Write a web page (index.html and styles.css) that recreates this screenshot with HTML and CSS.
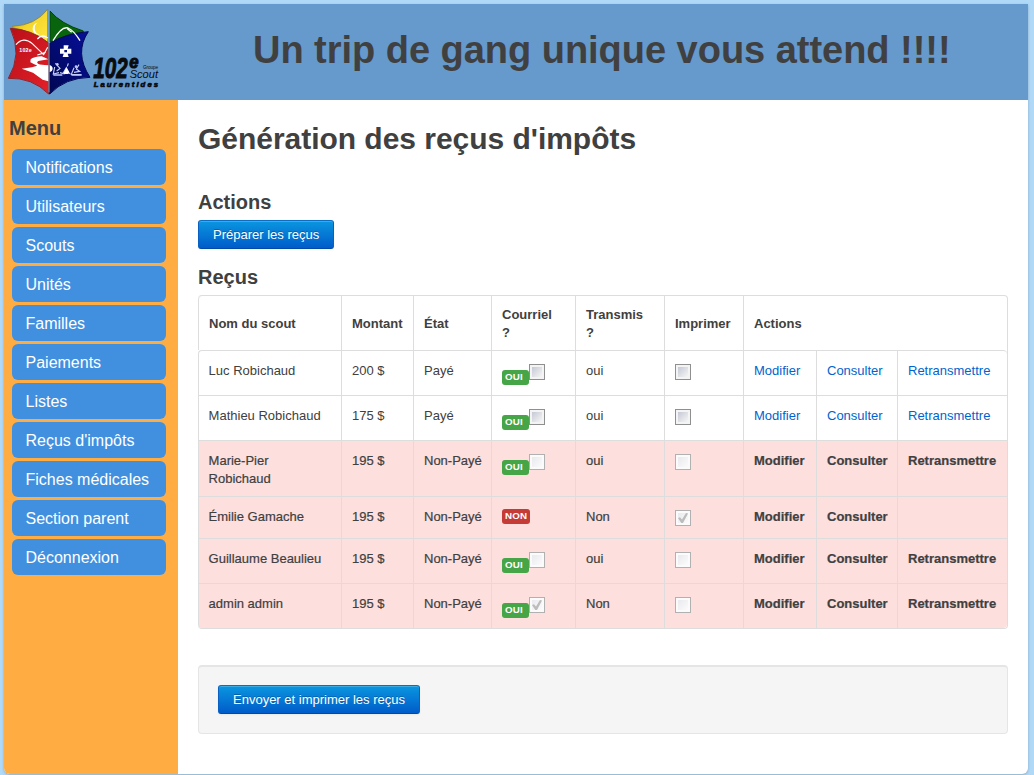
FILE: index.html
```
<!DOCTYPE html>
<html lang="fr">
<head>
<meta charset="utf-8">
<title>Génération des reçus d'impôts</title>
<link rel="stylesheet" href="styles.css">
</head>
<body>
<div class="page">
  <header class="banner">
    <svg class="logo" viewBox="12 12 480 288" width="160" height="96">
      <defs>
        <linearGradient id="yellow" x1="0" y1="0" x2="1" y2="1"><stop offset="0" stop-color="#b99b0c"/><stop offset=".45" stop-color="#f4d52b"/><stop offset="1" stop-color="#ffe83f"/></linearGradient>
        <linearGradient id="red" x1="0" y1="0" x2="1" y2="1"><stop offset="0" stop-color="#b80f17"/><stop offset="1" stop-color="#e3202a"/></linearGradient>
        <linearGradient id="blue" x1="1" y1="0" x2="0" y2="1"><stop offset="0" stop-color="#070f9d"/><stop offset="1" stop-color="#000750"/></linearGradient>
      </defs>
      <path d="M38 79Q106 76 143 28V126Q84 91 38 83Z" fill="url(#yellow)" stroke="#8f7c1d" stroke-width="2"/>
      <path d="M150 33Q183 74 252 77L249 96Q197 104 150 126Z" fill="none"/>
      <path d="M150 33Q183 72 250 93L249 97Q197 104 150 126Z" fill="#08650d" stroke="#034307" stroke-width="3" stroke-linejoin="round"/>
      <path d="M31 85Q96 88 146 129V282Q96 232 25 235Q68 163 31 85Z" fill="url(#red)" stroke="#8e252c" stroke-width="3" stroke-linejoin="round"/>
      <path d="M149 130Q194 101 265 95Q222 158 270 232Q196 233 149 282Z" fill="url(#blue)" stroke="#020955" stroke-width="3" stroke-linejoin="round"/>
      <path d="M113 68A18 18 0 1 0 119 104A20 20 0 0 1 113 68Z" fill="#fff"/>
      <path d="M112 117Q126 101 143 114" fill="none" stroke="#fff" stroke-width="4"/>
      <path d="M159 122Q185 78 204 84Q221 91 240 122M202 86L215 97" fill="none" stroke="#fff" stroke-width="4"/>
      <path d="M48 134Q70 108 97 131L131 164L143 142M112 165L137 157" fill="none" stroke="#fff" stroke-width="3.5"/>
      <path d="M92 178Q101 170 125 169L145 178L115 183Q101 194 145 196V244L128 239L99 218L65 206L96 202L112 197L91 187Z" fill="#fff"/>
      <text x="58" y="156" class="logo-tiny" textLength="37">102e</text>
      <path d="M188 136H206L203 146H214V161H203L206 171H188L191 161H180V146H191V136Z" fill="#fff"/>
      <path d="M193 150H201V157H193Z" fill="#071181"/>
      <path d="M149 195Q159 199 158 207Q156 217 149 216Z" fill="#fff"/>
      <path d="M166 190L180 205L170 213M164 201L160 222L177 218M180 218L194 222M188 222L199 203L207 219L211 221M205 190L202 199M237 194L229 207L239 214L222 217M222 203L214 223L239 224" fill="none" stroke="#c9d2f2" stroke-width="3.5"/>
      <path d="M192 216L199 203L208 217L205 222H192Z" fill="#fff"/>
      <g fill="#bfcaff"><circle cx="172" cy="193" r="4"/><circle cx="228" cy="200" r="4"/><path d="M160 223H187V227H160ZM216 222H245V227H214Z"/></g>
      <path d="M147 33V277" stroke="#75bbe0" stroke-width="2.5"/>
      <text x="280" y="233" class="logo-number" textLength="103" lengthAdjust="spacingAndGlyphs">102</text>
      <text x="388" y="205" class="logo-e" textLength="28" lengthAdjust="spacingAndGlyphs">e</text>
      <text x="429" y="206" class="logo-group" textLength="45">Groupe</text>
      <text x="389" y="234" class="logo-scout" textLength="85" lengthAdjust="spacingAndGlyphs">Scout</text>
      <text x="281" y="260" class="logo-place" textLength="193" lengthAdjust="spacing">Laurentides</text>
    </svg>
    <h1 class="slogan">Un trip de gang unique vous attend !!!!</h1>
  </header>
  <div class="columns">
    <nav class="sidebar">
      <h3 class="menu-title">Menu</h3>
      <a class="menu-item">Notifications</a>
      <a class="menu-item">Utilisateurs</a>
      <a class="menu-item">Scouts</a>
      <a class="menu-item">Unités</a>
      <a class="menu-item">Familles</a>
      <a class="menu-item">Paiements</a>
      <a class="menu-item">Listes</a>
      <a class="menu-item">Reçus d'impôts</a>
      <a class="menu-item">Fiches médicales</a>
      <a class="menu-item">Section parent</a>
      <a class="menu-item">Déconnexion</a>
    </nav>
    <main class="content">
      <h1 class="title">Génération des reçus d'impôts</h1>
      <h3 class="section">Actions</h3>
      <a class="btn prepare">Préparer les reçus</a>
      <h3 class="section receipts">Reçus</h3>
      <table class="grid">
        <colgroup><col class="c-name"><col class="c-amount"><col class="c-state"><col class="c-mail"><col class="c-sent"><col class="c-print"><col class="c-edit"><col class="c-view"><col class="c-resend"></colgroup>
        <thead>
          <tr><th>Nom du scout</th><th>Montant</th><th>État</th><th>Courriel<br>?</th><th>Transmis<br>?</th><th>Imprimer</th><th colspan="3">Actions</th></tr>
        </thead>
        <tbody>
          <tr class="r45"><td>Luc Robichaud</td><td>200 $</td><td>Payé</td><td><div class="mail"><span class="label">OUI</span><input type="checkbox"></div></td><td>oui</td><td><input type="checkbox"></td><td><a>Modifier</a></td><td><a>Consulter</a></td><td><a>Retransmettre</a></td></tr>
          <tr class="r45"><td>Mathieu Robichaud</td><td>175 $</td><td>Payé</td><td><div class="mail"><span class="label">OUI</span><input type="checkbox"></div></td><td>oui</td><td><input type="checkbox"></td><td><a>Modifier</a></td><td><a>Consulter</a></td><td><a>Retransmettre</a></td></tr>
          <tr class="r56 unpaid"><td>Marie-Pier<br>Robichaud</td><td>195 $</td><td>Non-Payé</td><td><div class="mail"><span class="label">OUI</span><input type="checkbox" disabled></div></td><td>oui</td><td><input type="checkbox" disabled></td><td><b>Modifier</b></td><td><b>Consulter</b></td><td><b>Retransmettre</b></td></tr>
          <tr class="r42 unpaid"><td>Émilie Gamache</td><td>195 $</td><td>Non-Payé</td><td><div class="mail"><span class="label no">NON</span></div></td><td>Non</td><td><input type="checkbox" disabled checked></td><td><b>Modifier</b></td><td><b>Consulter</b></td><td></td></tr>
          <tr class="r45 unpaid"><td>Guillaume Beaulieu</td><td>195 $</td><td>Non-Payé</td><td><div class="mail"><span class="label">OUI</span><input type="checkbox" disabled></div></td><td>oui</td><td><input type="checkbox" disabled></td><td><b>Modifier</b></td><td><b>Consulter</b></td><td><b>Retransmettre</b></td></tr>
          <tr class="r45 unpaid"><td>admin admin</td><td>195 $</td><td>Non-Payé</td><td><div class="mail"><span class="label">OUI</span><input type="checkbox" disabled checked></div></td><td>Non</td><td><input type="checkbox" disabled></td><td><b>Modifier</b></td><td><b>Consulter</b></td><td><b>Retransmettre</b></td></tr>
        </tbody>
      </table>
      <div class="form-actions"><a class="btn send">Envoyer et imprimer les reçus</a></div>
    </main>
  </div>
</div>
</body>
</html>
```
FILE: styles.css
```
* { box-sizing: border-box; }
body {
  margin: 0;
  padding: 4px;
  height: 775px;
  overflow: hidden;
  background: #b0d8f7;
  color: #404040;
  font: 13px/18px "Liberation Sans", Arial, sans-serif;
}
h1, h3 { margin: 0; }
.page {
  width: 1024px;
  height: 770px;
  display: flex;
  flex-direction: column;
  background: #fff;
  border-radius: 0 0 6px 6px;
  overflow: hidden;
  box-shadow: 0 1px 3px rgba(0, 0, 0, .2);
}
.banner { height: 96px; flex: none; display: flex; background: #6699cc; }
.logo { flex: none; }
.slogan { margin-left: 89px; padding-top: 28px; font-size: 38px; line-height: 36px; white-space: nowrap; letter-spacing: -.03px; }
.logo text { font-family: "Liberation Sans", Arial, sans-serif; fill: #090b0e; }
.logo .logo-tiny { font-size: 16px; font-weight: bold; fill: #fff; }
.logo .logo-number { font-size: 86px; font-weight: bold; font-style: italic; stroke: #090b0e; stroke-width: 3px; }
.logo .logo-e { font-size: 54px; font-weight: bold; font-style: italic; stroke: #090b0e; stroke-width: 3px; }
.logo .logo-group { font-size: 14px; }
.logo .logo-scout { font-size: 34px; font-style: italic; }
.logo .logo-place { font-size: 23px; font-weight: bold; font-style: italic; stroke: #090b0e; stroke-width: 2px; }

.columns { flex: 1; display: flex; }
.sidebar { width: 174px; padding: 14px 12px 0 8px; background: #ffac42; display: flex; flex-direction: column; gap: 3px; }
.menu-title { margin-left: -3px; height: 32px; font-size: 20px; line-height: 28px; }
.menu-item { height: 36px; padding-left: 13.5px; border-radius: 6px; background: #4190e0; color: #fff; font-size: 16px; line-height: 37px; white-space: nowrap; }

.content { width: 850px; padding: 20px; }
.title { height: 68px; font-size: 30px; line-height: 37px; white-space: nowrap; letter-spacing: -.03px; }
.section { height: 32px; font-size: 20px; line-height: 28px; }
.receipts { margin-top: 15px; height: 31px; line-height: 27px; }
.btn {
  display: block;
  height: 29px;
  padding-left: 14px;
  border: 1px solid #0055cc;
  border-color: #0a6fc4 #0a5fc0 #0049a6;
  border-radius: 3px;
  background: linear-gradient(#0a96df, #005cca);
  box-shadow: inset 0 1px 0 rgba(255, 255, 255, .2), 0 1px 2px rgba(0, 0, 0, .05);
  color: #fff;
  line-height: 27px;
  text-shadow: 0 -1px 0 rgba(0, 0, 0, .25);
  white-space: nowrap;
}
.prepare { width: 136px; }
.send { width: 202px; }

.grid { width: 810px; table-layout: fixed; border: 1px solid #ddd; border-left: 0; border-radius: 4px; border-collapse: separate; border-spacing: 0; }
.c-name { width: 143px; }
.c-amount { width: 72px; }
.c-state { width: 78px; }
.c-mail { width: 84px; }
.c-sent { width: 89px; }
.c-print { width: 79px; }
.c-edit { width: 73px; }
.c-view { width: 81px; }
.c-resend { width: 110px; }
.grid th, .grid td { padding: 11px 0 0 10px; border-left: 1px solid #ddd; text-align: left; vertical-align: top; white-space: nowrap; }
.grid th { height: 54px; padding: 2px 0 0 10px; vertical-align: middle; }
.grid th:first-child { border-top-left-radius: 4px; }
.grid td { border-top: 1px solid #ddd; }
.grid td:first-child { padding-left: 9.6px; }
.grid tbody tr:first-child td:first-child { border-top-left-radius: 4px; }
.grid tbody tr:first-child td:last-child { border-top-right-radius: 4px; }
.grid tr:last-child td:first-child { border-bottom-left-radius: 4px; }
.grid tr:last-child td:last-child { border-bottom-right-radius: 4px; }
.r45 { height: 45px; }
.r56 { height: 56px; }
.r42 { height: 42px; }
.unpaid td { background: #fddfde; }
.unpaid { -webkit-text-stroke: .2px #404040; }
.grid a { color: #0064cd; }
.mail { display: flex; align-items: flex-start; }
.label { width: 27px; height: 15px; margin-top: 8px; padding-left: 3px; border-radius: 3px; background: #46a546; color: #fff; font-size: 9.75px; font-weight: bold; line-height: 14px; letter-spacing: .2px; -webkit-text-stroke: 0; }
.label.no { width: 28px; margin-top: 1px; background: #c43c35; }
input { appearance: none; display: block; position: relative; width: 16px; height: 16px; margin: 2px 0 0; border: 1px solid #8e8f8f; background: linear-gradient(135deg, #c5c9d4, #f6f6f6) 2px 2px / 10px 10px no-repeat #f4f4f4; }
input:disabled { border-color: #b1b1b1; background: linear-gradient(135deg, #e9eaee, #fbfbfb) 2px 2px / 10px 10px no-repeat #fbfbfb; }
input:checked::before { content: ""; position: absolute; inset: 2px; background: #bcbcbc; clip-path: polygon(0 50%, 20% 43%, 40% 65%, 80% 0, 100% 5%, 50% 100%, 33% 100%); }

.form-actions { height: 69px; margin-top: 36px; padding: 18px 19px 19px; border: 1px solid #e5e5e5; border-top-width: 2px; border-radius: 4px; background: #f5f5f5; }
```
